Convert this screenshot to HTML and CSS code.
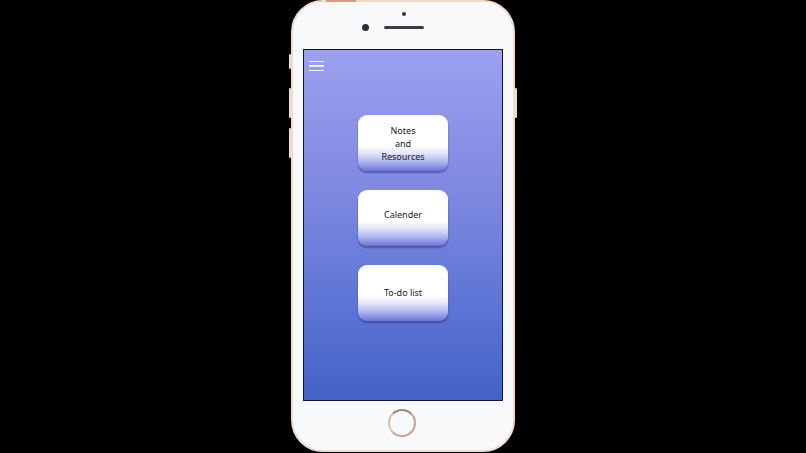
FILE: index.html
```html
<!DOCTYPE html>
<html>
<head>
<meta charset="utf-8">
<link rel="stylesheet" href="styles.css">
</head>
<body>
<div class="stage">
  <div class="phone">
    <span class="side side-mute"></span>
    <span class="side side-vol1"></span>
    <span class="side side-vol2"></span>
    <span class="side side-power"></span>
    <span class="top-btn"></span>
    <div class="phone-top">
      <span class="sensor"></span>
      <div class="cam-row">
        <span class="camera"></span>
        <span class="speaker"></span>
      </div>
    </div>
    <div class="screen">
      <div class="menu-icon"><span></span><span></span><span></span></div>
      <div class="buttons">
        <div class="app-btn btn-notes">Notes<br>and<br>Resources</div>
        <div class="app-btn btn-cal">Calender</div>
        <div class="app-btn btn-todo">To-do list</div>
      </div>
    </div>
    <div class="phone-bottom">
      <span class="home"></span>
    </div>
  </div>
</div>
</body>
</html>
```
FILE: styles.css
```css
html, body {
  margin: 0;
  padding: 0;
  background: #000;
  width: 806px;
  height: 453px;
  overflow: hidden;
}
.stage {
  display: flex;
  justify-content: center;
}
.phone {
  position: relative;
  box-sizing: border-box;
  width: 224px;
  height: 452px;
  background: #f8f9fb;
  border: 2.5px solid #f1dccb;
  border-radius: 32px;
  display: flex;
  flex-direction: column;
  align-items: center;
}
.side {
  position: absolute;
  width: 2px;
  background: #eedccf;
  border-radius: 1px;
}
.side-mute { left: -4px; top: 52px; height: 15px; }
.side-vol1 { left: -4px; top: 86px; height: 30px; }
.side-vol2 { left: -4px; top: 126px; height: 30px; }
.side-power { right: -4px; top: 86px; height: 30px; }
.top-btn {
  position: absolute;
  top: -3px;
  left: 33px;
  width: 30px;
  height: 3px;
  background: #e29a78;
}
.phone-top {
  height: 47px;
  width: 100%;
  display: flex;
  flex-direction: column;
  align-items: center;
}
.sensor {
  width: 4px;
  height: 4px;
  border-radius: 50%;
  background: #333844;
  margin-top: 10px;
  margin-left: 1px;
}
.cam-row {
  display: flex;
  align-items: center;
  margin-top: 8px;
  margin-left: -20px;
}
.camera {
  width: 7px;
  height: 7px;
  border-radius: 50%;
  background: #273042;
}
.speaker {
  width: 40px;
  height: 3px;
  border-radius: 2px;
  background: #3a3d44;
  margin-left: 15px;
}
.screen {
  position: relative;
  box-sizing: border-box;
  width: 200px;
  height: 352px;
  border: 1.5px solid #14142a;
  background: linear-gradient(to bottom, #9ca0f0 0%, #7f89e0 40%, #5b73d4 75%, #4461c6 100%);
}
.menu-icon {
  position: absolute;
  left: 5px;
  top: 11px;
  width: 15px;
  display: flex;
  flex-direction: column;
  gap: 3px;
}
.menu-icon span {
  display: block;
  height: 1.3px;
  background: #eef0ff;
}
.buttons {
  display: flex;
  flex-direction: column;
  align-items: center;
  gap: 19px;
  padding-top: 65px;
}
.app-btn {
  box-sizing: border-box;
  width: 90px;
  height: 56px;
  border-radius: 9px;
  background: linear-gradient(to bottom, #ffffff 0%, #ffffff 55%, #e4e6fb 68%, #a9b0ee 85%, #6a75d6 100%);
  box-shadow: 0 2px 2px rgba(40, 50, 130, 0.55);
  display: flex;
  align-items: center;
  justify-content: center;
  text-align: center;
  font-family: "Noto Sans", "Open Sans", sans-serif;
  font-size: 9px;
  line-height: 13px;
  color: #1a1a20;
}
.btn-notes { padding-bottom: 0; }
.btn-cal { padding-bottom: 8px; }
.btn-todo { padding-bottom: 2px; }
.phone-bottom {
  flex: 1;
  width: 100%;
  display: flex;
  justify-content: center;
  align-items: flex-start;
}
.home {
  box-sizing: border-box;
  width: 28px;
  height: 28px;
  border-radius: 50%;
  margin-top: 8px;
  margin-left: -3px;
  border: 2px solid #c4a48e;
  border-top-color: #a88468;
  border-left-color: #d8c0ae;
}
```
